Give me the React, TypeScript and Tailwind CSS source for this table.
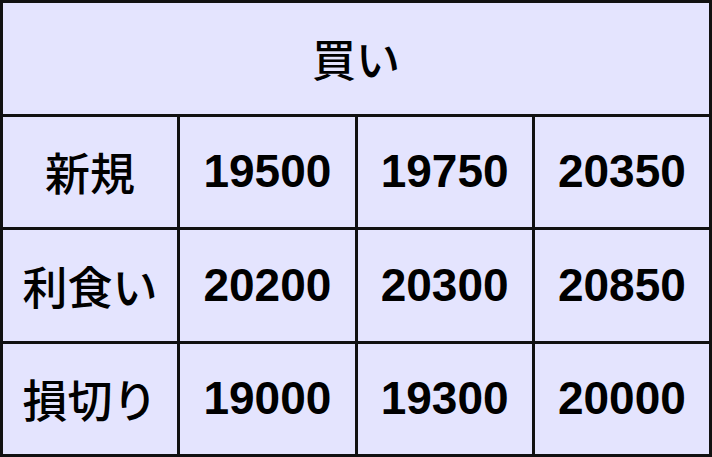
const rows = [
  { label: "新規", values: ["19500", "19750", "20350"] },
  { label: "利食い", values: ["20200", "20300", "20850"] },
  { label: "損切り", values: ["19000", "19300", "20000"] },
];

const jp = "font-['Noto_Sans_CJK_JP',sans-serif]";
const num = "font-['Liberation_Sans',Arial,sans-serif]";

export default function App() {
  return (
    <div className="w-[712px] h-[457px] bg-[#111111] p-[3px]">
      <div className="grid h-full grid-cols-4 grid-rows-4 gap-[3px]">
        <div
          className={`col-span-4 flex items-center justify-center bg-[#e4e4fe] text-[44px] font-medium text-black ${jp}`}
        >
          買い
        </div>
        {rows.map((row) => (
          <div key={row.label} className="contents">
            <div
              className={`flex items-center justify-center bg-[#e4e4fe] text-[45px] font-medium text-black ${jp}`}
            >
              {row.label}
            </div>
            {row.values.map((v) => (
              <div
                key={v}
                className={`flex items-center justify-center bg-[#e4e4fe] text-[46px] font-bold text-black ${num}`}
              >
                {v}
              </div>
            ))}
          </div>
        ))}
      </div>
    </div>
  );
}
